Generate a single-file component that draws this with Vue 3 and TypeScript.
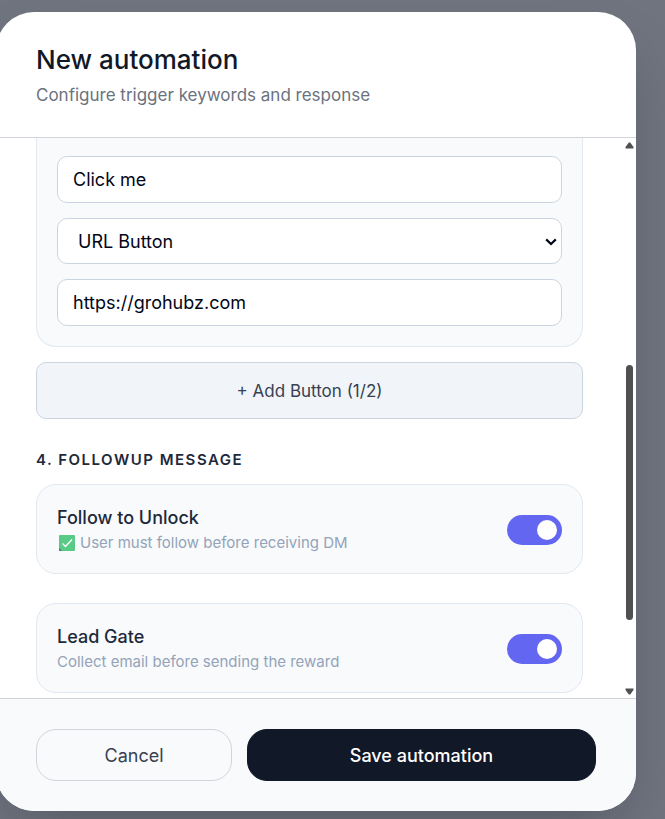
<script setup lang="ts">
import { reactive, ref } from 'vue'

interface Gate {
  id: string
  title: string
  description: string
  checked: boolean
  enabled: boolean
}

const buttonLabel = ref('Click me')
const buttonType = ref('url')
const buttonUrl = ref('https://grohubz.com')

const gates = reactive<Gate[]>([
  {
    id: 'follow-gate',
    title: 'Follow to Unlock',
    description: 'User must follow before receiving DM',
    checked: true,
    enabled: true,
  },
  {
    id: 'lead-gate',
    title: 'Lead Gate',
    description: 'Collect email before sending the reward',
    checked: false,
    enabled: true,
  },
])
</script>

<template>
  <div class="overlay">
    <form class="dialog" role="dialog" aria-labelledby="dialog-title" @submit.prevent>
      <header class="header">
        <h1 id="dialog-title" class="title">New automation</h1>
        <p class="subtitle">Configure trigger keywords and response</p>
      </header>

      <div class="body">
        <div class="content">
          <div class="fields">
            <input v-model="buttonLabel" class="control" type="text" aria-label="Button text" />
            <div class="select-wrap">
              <select v-model="buttonType" class="control select" aria-label="Button type">
                <option value="url">URL Button</option>
              </select>
              <svg class="chevron" viewBox="0 0 12 8" aria-hidden="true">
                <path d="M1.2 1.4L6 6l4.8-4.6" fill="none" stroke="#020617" stroke-width="2.2" />
              </svg>
            </div>
            <input v-model="buttonUrl" class="control" type="text" aria-label="Button URL" />
          </div>

          <button class="add" type="button">+ Add Button (1/2)</button>

          <h2 class="section">4. Followup message</h2>

          <div class="gates">
            <div v-for="gate in gates" :key="gate.id" class="gate">
              <label class="gate-text" :for="gate.id">
                <span class="gate-title">{{ gate.title }}</span>
                <span class="gate-description">
                  <svg v-if="gate.checked" class="check" viewBox="0 0 16 16" aria-hidden="true">
                    <rect width="16" height="16" rx="1" fill="#5acb87" />
                    <path d="M0 12.5V15a1 1 0 0 0 1 1h2z" fill="#4d8069" />
                    <path d="M3.5 8.5l3 3L13 4.5" fill="none" stroke="#fff" stroke-width="1.4" />
                  </svg>
                  {{ gate.description }}
                </span>
              </label>
              <input :id="gate.id" v-model="gate.enabled" class="toggle" type="checkbox" role="switch" />
            </div>
          </div>
        </div>

        <div class="scrollbar" aria-hidden="true">
          <svg class="arrow" viewBox="0 0 9 7"><path d="M3.8.6h1.4L8.5 5v1.4h-8V5z" fill="#505050" /></svg>
          <div class="track"><div class="thumb"></div></div>
          <svg class="arrow" viewBox="0 0 9 7"><path d="M3.8 6.4h1.4L8.5 2V.6h-8V2z" fill="#505050" /></svg>
        </div>
      </div>

      <footer class="footer">
        <button class="action cancel" type="button">Cancel</button>
        <button class="action save" type="submit">Save automation</button>
      </footer>
    </form>
  </div>
</template>

<style>
body {
  margin: 0;
  background: #70747f;
}
</style>

<style scoped>
* {
  box-sizing: border-box;
}

.overlay {
  display: flex;
  min-height: 100vh;
  padding: 12px 29px 8px 0;
  overflow: hidden;
  background: #70747f;
  font-family: Inter, 'Open Sans', sans-serif;
}

.dialog {
  display: flex;
  flex: 1;
  flex-direction: column;
  min-width: 0;
  margin-left: -4px;
  overflow: hidden;
  border-radius: 38px;
  background: #fff;
  box-shadow: 0 30px 62px -15px rgba(0, 10, 20, 0.25);
}

.header {
  padding: 30px 40px 29px;
  border-bottom: 1px solid #d1d5db;
}

.title {
  margin: 0 0 5px;
  color: #111827;
  font-size: 26px;
  font-weight: 500;
  line-height: 36px;
}

.subtitle {
  margin: 0;
  color: #6b7280;
  font-size: 17px;
  line-height: 25px;
}

.body {
  display: flex;
  flex: 1;
}

.content {
  flex: 1;
  min-width: 0;
  padding: 0 40px 5px;
}

.fields {
  display: grid;
  gap: 15px;
  padding: 18px 20px 20px;
  border: 1px solid #e2e8f0;
  border-top: 0;
  border-radius: 0 0 20px 20px;
  background: #f8fafc;
}

.control {
  width: 100%;
  height: 47px;
  padding: 0 15px;
  border: 1px solid #cbd5e1;
  border-radius: 10px;
  background: #fff;
  color: #020617;
  font: inherit;
  font-size: 18px;
}

.select-wrap {
  display: flex;
  position: relative;
}

.select {
  height: 46px;
  padding: 0 20px;
  appearance: none;
}

.chevron {
  position: absolute;
  top: 20px;
  right: 5px;
  width: 12px;
  height: 8px;
  pointer-events: none;
}

.add {
  display: block;
  width: 100%;
  height: 57px;
  margin-top: 15px;
  border: 1px solid #cbd5e1;
  border-radius: 10px;
  background: #f1f5f9;
  color: #374151;
  font: inherit;
  font-size: 17px;
}

.section {
  margin: 29px 0 12px;
  color: #1e293b;
  font-size: 15px;
  font-weight: 600;
  letter-spacing: 1.5px;
  line-height: 24px;
  text-transform: uppercase;
}

.gates {
  display: grid;
  gap: 29px;
}

.gate {
  display: flex;
  align-items: center;
  justify-content: space-between;
  padding: 20px 20px 19px;
  border: 1px solid #e2e8f0;
  border-radius: 20px;
  background: #f8fafc;
}

.gate-text {
  display: grid;
  gap: 1px;
}

.gate-title {
  color: #1e293b;
  font-size: 18px;
  font-weight: 500;
  line-height: 26px;
}

.gate-description {
  display: flex;
  align-items: center;
  gap: 5px;
  color: #94a3b8;
  font-size: 15px;
  line-height: 22px;
}

.check {
  width: 16px;
  height: 16px;
  margin-left: 2px;
}

.toggle {
  display: flex;
  flex: none;
  align-items: center;
  width: 55px;
  height: 30px;
  margin: 0;
  padding: 0 5px;
  border-radius: 15px;
  appearance: none;
  background: #cbd5e1;
}

.toggle::before {
  width: 20px;
  height: 20px;
  border-radius: 50%;
  background: #fff;
  content: '';
}

.toggle:checked {
  justify-content: flex-end;
  background: #6366f1;
}

.scrollbar {
  display: flex;
  flex: none;
  flex-direction: column;
  align-items: center;
  width: 13px;
  padding: 4px 0 3px;
}

.arrow {
  flex: none;
  width: 9px;
  height: 7px;
}

.track {
  flex: 1;
  width: 7px;
  padding: 216px 0 68px;
}

.thumb {
  height: 100%;
  min-height: 255px;
  border-radius: 4px;
  background: #505050;
}

.footer {
  display: flex;
  gap: 15px;
  padding: 30px 40px;
  border-top: 1px solid #d1d5db;
  background: #f8fafc;
}

.action {
  height: 52px;
  border: 1px solid #d1d5db;
  border-radius: 20px;
  font: inherit;
  font-size: 18px;
}

.cancel {
  flex: 0 0 35%;
  background: transparent;
  color: #374151;
}

.save {
  flex: 1;
  border-color: #111827;
  background: #111827;
  color: #fff;
  font-weight: 500;
}
</style>
